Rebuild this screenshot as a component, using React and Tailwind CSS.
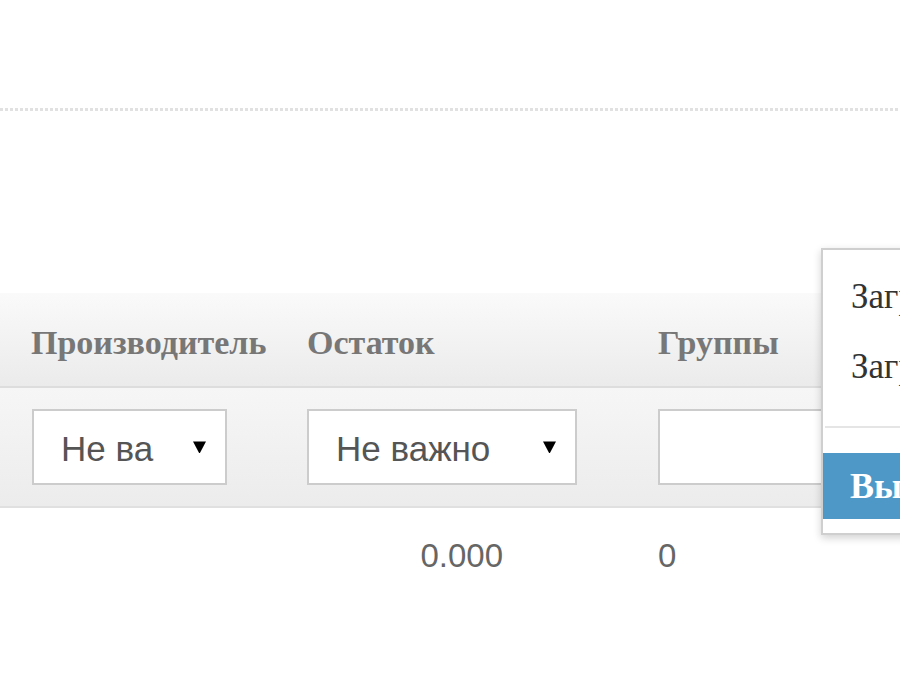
function Arrow() {
  return (
    <svg width="15" height="14" viewBox="0 0 15 14" className="shrink-0">
      <path d="M1 1.5 L14 1.5 L8.2 12.5 Q7.5 13.6 6.8 12.5 Z" fill="#000" />
    </svg>
  );
}

function Select({ label, width }) {
  return (
    <div
      className={`flex h-[76px] items-center justify-between border-2 border-[#cccccc] bg-white pl-[27px] pr-[18px] ${width}`}
    >
      <span className="whitespace-nowrap pt-[3px] text-[35px] leading-none text-[#555555]">{label}</span>
      <Arrow />
    </div>
  );
}

export default function App() {
  return (
    <div
      className="relative h-[700px] w-[900px] overflow-hidden bg-white"
      style={{ fontFamily: '"Liberation Sans", Arial, sans-serif' }}
    >
      <div className="h-[108px]" />
      <div className="h-[3px] bg-[repeating-linear-gradient(90deg,#e1e1e1_0_3px,transparent_3px_5px)]" />
      <div className="h-[182px]" />

      {/* header */}
      <div className="flex h-[95px] items-center border-b-2 border-[#dddddd] bg-gradient-to-b from-[#fafafa] to-[#ebebeb] pt-[6px] font-['Liberation_Serif',serif] text-[34px] font-bold text-[#777777]">
        <div className="w-[276px] shrink-0 pl-[31px]">Производитель</div>
        <div className="w-[351px] shrink-0 pl-[31px]">Остаток</div>
        <div className="pl-[31px]">Группы</div>
      </div>

      {/* filters */}
      <div className="flex h-[120px] items-center border-b-2 border-[#e0e0e0] bg-gradient-to-b from-[#f6f6f6] to-[#ececec]">
        <div className="w-[276px] shrink-0 pl-[32px]">
          <Select label="Не ва" width="w-[195px]" />
        </div>
        <div className="w-[351px] shrink-0 pl-[31px]">
          <Select label="Не важно" width="w-[270px]" />
        </div>
        <div className="min-w-0 flex-1 pl-[31px]">
          <div className="h-[76px] w-[300px] border-2 border-[#cccccc] bg-white" />
        </div>
      </div>

      {/* row */}
      <div className="flex h-[96px] items-center text-[33px] text-[#666666]">
        <div className="w-[503px] shrink-0 text-right">0.000</div>
        <div className="pl-[155px]">0</div>
      </div>

      {/* popup menu */}
      <div className="absolute left-[821px] top-[248px] flex h-[287px] w-[140px] flex-col border-2 border-[#cfcfcf] bg-white font-['Liberation_Serif',serif] shadow-[0_3px_8px_rgba(0,0,0,0.18)]">
        <div className="flex flex-col pl-[28px] pt-[29px] text-[35px] leading-none text-[#333333]">
          <div className="h-[70px] whitespace-nowrap">Загрузить</div>
          <div className="h-[70px] whitespace-nowrap">Загрузить все</div>
        </div>
        <div className="ml-[2px] mt-[7px] h-[2px] bg-[#e5e5e5]" />
        <div className="mt-[25px] flex h-[66px] items-center whitespace-nowrap bg-[#4e98c7] pl-[27px] text-[36px] font-bold text-white">
          Выбрать
        </div>
      </div>
    </div>
  );
}
